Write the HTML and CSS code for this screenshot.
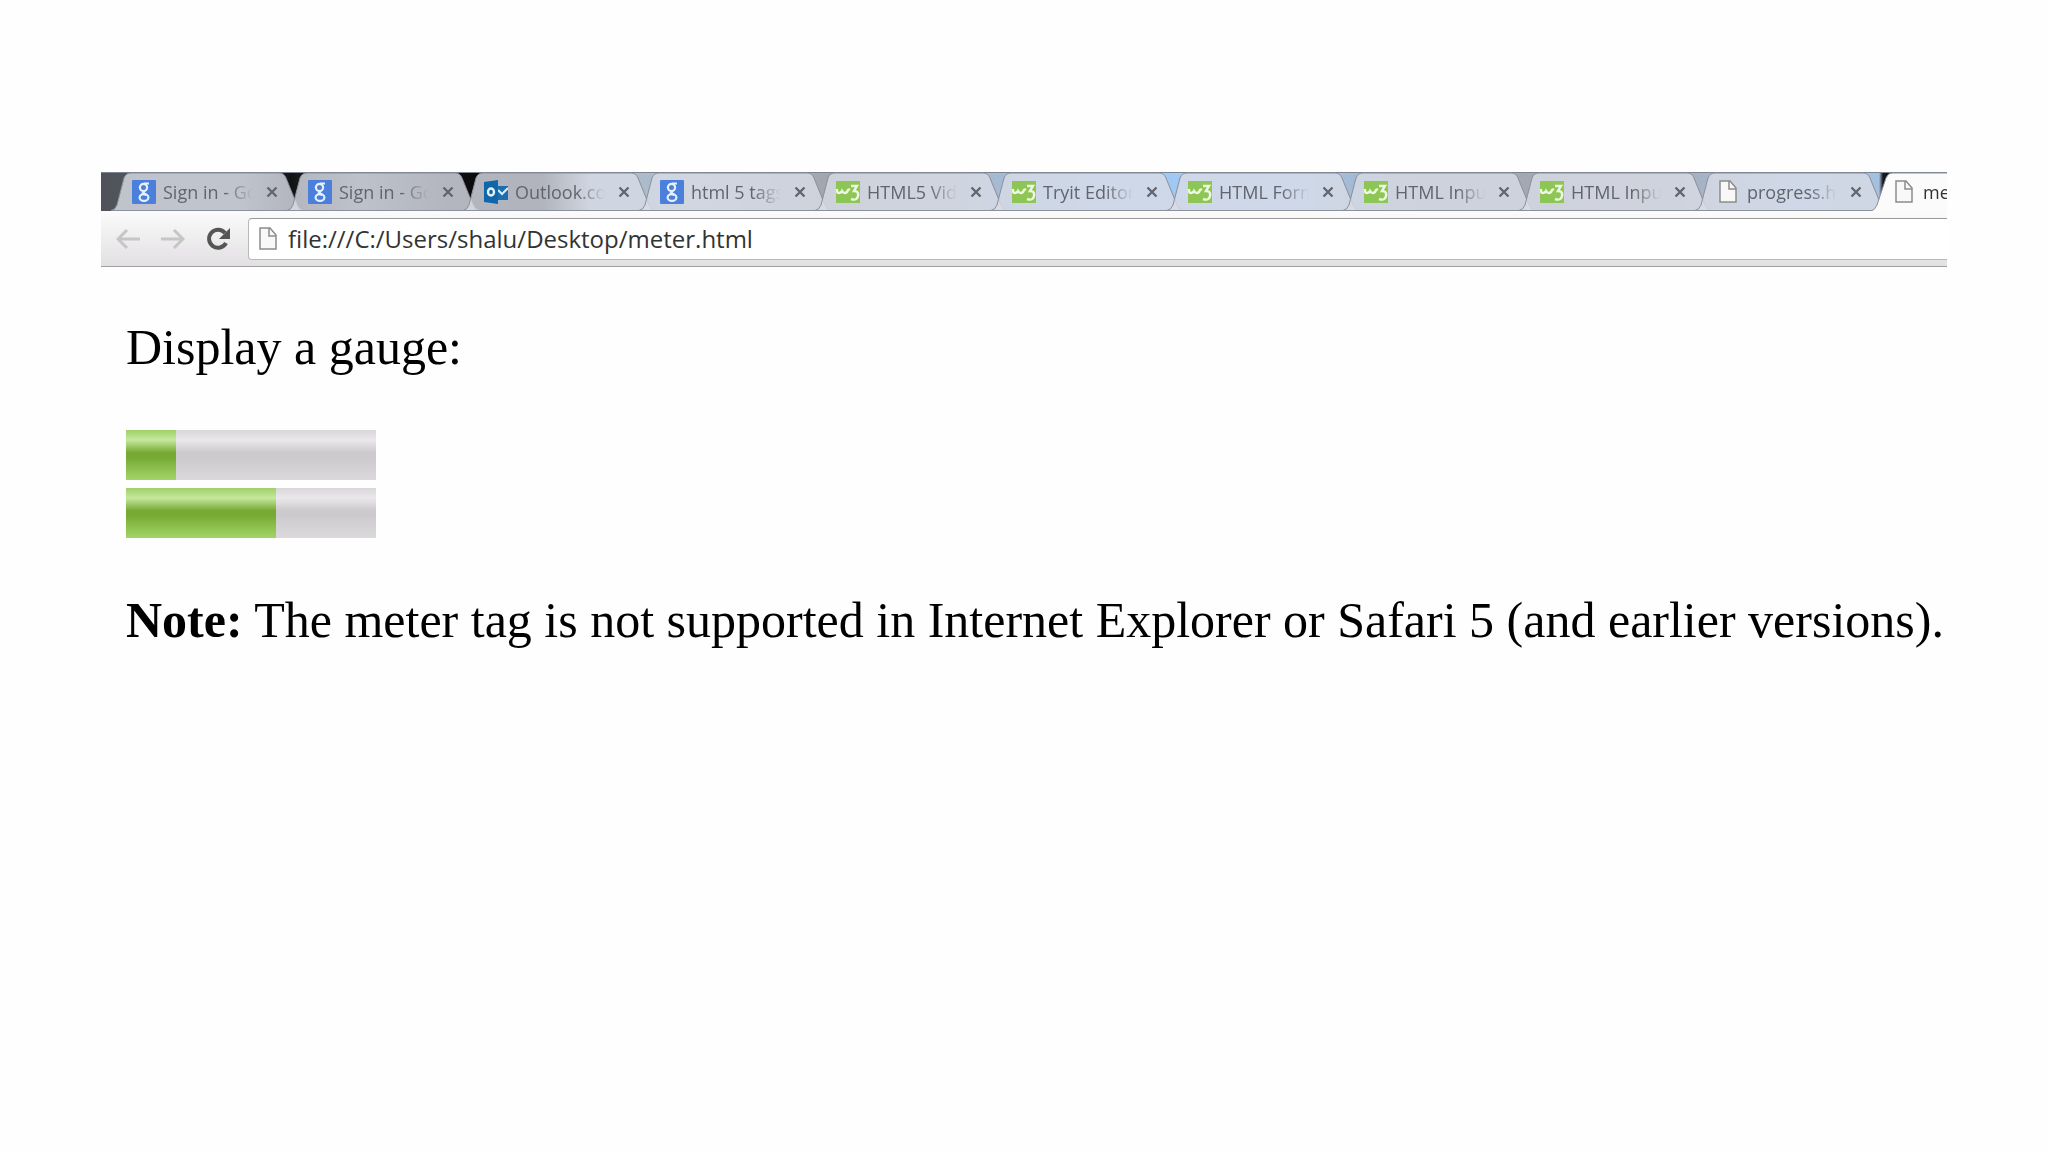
FILE: index.html
```html
<!DOCTYPE html>
<html lang="en">
<head>
  <meta charset="UTF-8">
  <title>meter.html</title>
  <link rel="stylesheet" href="styles.css">
</head>
<body>
  <!-- shared icons -->
  <svg class="defs" aria-hidden="true">
    <symbol id="google" viewBox="0 0 24 24">
      <rect width="24" height="24" rx="1" fill="#4a80dc"/>
      <g fill="none" stroke="#e6f0ff" stroke-width="2.2">
        <ellipse cx="11.500" cy="7.500" rx="3.600" ry="3.600"/>
        <path d="M12 3.500h5M13 11l-2 2 3 2"/>
        <ellipse cx="12" cy="17.500" rx="4.400" ry="3.400"/>
      </g>
    </symbol>
    <symbol id="outlook" viewBox="0 0 24 24">
      <path d="M14 6h11v14H14z" fill="#1b6fb0"/>
      <path d="M14 10l4 4 6-6" fill="none" stroke="#dcebf7" stroke-width="2"/>
      <path d="M0 2l14-2v24L0 22z" fill="#0f66a8"/>
      <ellipse cx="7" cy="12" rx="3" ry="3.500" fill="none" stroke="#e4f1fa" stroke-width="2.400"/>
    </symbol>
    <symbol id="w3" viewBox="0 0 24 24">
      <path d="M0 1h24v22H0z" fill="#8dc655"/>
      <path d="M1 9v2q0 2 2 2t3-2q1 2 3 2t3-3l2-1" fill="none" stroke="#eef8e0" stroke-width="2.400"/>
      <path d="M15 6h6l-3 5q5 0 4 5t-7 3" fill="none" stroke="#eef8e0" stroke-width="2.400"/>
    </symbol>
    <symbol id="page" viewBox="0 0 24 24">
      <path d="M4 1h10l6 7v14H4z" fill="#f8f8f8" stroke="#8c8c8c" stroke-width="1.500"/>
      <path d="M13 1v8h7" fill="none" stroke="#8c8c8c" stroke-width="1.500"/>
    </symbol>
    <symbol id="close" viewBox="0 0 12 12">
      <path d="M1.500 1.500l9 9M10.500 1.500l-9 9" stroke="#62666e" stroke-width="2.400"/>
    </symbol>
    <symbol id="shape" viewBox="0 0 192 39" preserveAspectRatio="none">
      <path d="M0 38.500Q4 38 6 33L13 6Q15 1 20 1H168Q173 1 175 6L186 33Q188 38 192 38.500z"/>
    </symbol>
    <symbol id="shape-open" viewBox="0 0 192 39" preserveAspectRatio="none">
      <path d="M0 39Q4 38 6 33L15 6Q17 1 21 1H168Q173 1 175 6L186 33Q188 38 192 39"/>
    </symbol>
  </svg>

  <div class="window">
    <nav class="tabs">
      <div class="tab"><svg class="shape"><use href="#shape"/></svg><svg class="icon"><use href="#google"/></svg><button class="title">Sign in - Google</button><button class="close" aria-label="Close"><svg><use href="#close"/></svg></button></div>
      <div class="tab"><svg class="shape"><use href="#shape"/></svg><svg class="icon"><use href="#google"/></svg><button class="title">Sign in - Google</button><button class="close" aria-label="Close"><svg><use href="#close"/></svg></button></div>
      <div class="tab"><svg class="shape"><use href="#shape"/></svg><svg class="icon"><use href="#outlook"/></svg><button class="title">Outlook.com</button><button class="close" aria-label="Close"><svg><use href="#close"/></svg></button></div>
      <div class="tab"><svg class="shape"><use href="#shape"/></svg><svg class="icon"><use href="#google"/></svg><button class="title">html 5 tags</button><button class="close" aria-label="Close"><svg><use href="#close"/></svg></button></div>
      <div class="tab"><svg class="shape"><use href="#shape"/></svg><svg class="icon"><use href="#w3"/></svg><button class="title">HTML5 Video</button><button class="close" aria-label="Close"><svg><use href="#close"/></svg></button></div>
      <div class="tab"><svg class="shape"><use href="#shape"/></svg><svg class="icon"><use href="#w3"/></svg><button class="title">Tryit Editor</button><button class="close" aria-label="Close"><svg><use href="#close"/></svg></button></div>
      <div class="tab"><svg class="shape"><use href="#shape"/></svg><svg class="icon"><use href="#w3"/></svg><button class="title">HTML Forms</button><button class="close" aria-label="Close"><svg><use href="#close"/></svg></button></div>
      <div class="tab"><svg class="shape"><use href="#shape"/></svg><svg class="icon"><use href="#w3"/></svg><button class="title">HTML Input</button><button class="close" aria-label="Close"><svg><use href="#close"/></svg></button></div>
      <div class="tab"><svg class="shape"><use href="#shape"/></svg><svg class="icon"><use href="#w3"/></svg><button class="title">HTML Input</button><button class="close" aria-label="Close"><svg><use href="#close"/></svg></button></div>
      <div class="tab"><svg class="shape"><use href="#shape"/></svg><svg class="icon"><use href="#page"/></svg><button class="title">progress.html</button><button class="close" aria-label="Close"><svg><use href="#close"/></svg></button></div>
      <div class="tab active"><svg class="shape"><use href="#shape-open"/></svg><svg class="icon"><use href="#page"/></svg><button class="title">meter.html</button></div>
    </nav>

    <div class="toolbar">
      <button class="nav" aria-label="Back"><svg viewBox="0 0 24 24"><path d="M24 12H2M11 3l-9 9 9 9" stroke="#c6c6c6"/></svg></button>
      <button class="nav" aria-label="Forward"><svg viewBox="0 0 24 24"><path d="M0 12h22M13 3l9 9-9 9" stroke="#c6c6c6"/></svg></button>
      <button class="nav" aria-label="Reload"><svg viewBox="0 0 24 24"><path d="M19 6A9 9 0 1 0 20 16" stroke="#555" stroke-width="4"/><path d="M24 1v11H13z" fill="#555"/></svg></button>
      <label class="address">
        <svg class="icon"><use href="#page"/></svg>
        <input type="text" aria-label="Address" value="file:///C:/Users/shalu/Desktop/meter.html">
      </label>
    </div>

    <main>
      <p>Display a gauge:</p>
      <div class="meters">
        <meter value="2" min="0" max="10" aria-label="2 out of 10"></meter>
        <meter value="0.6" aria-label="60%"></meter>
      </div>
      <p><b>Note:</b> The meter tag is not supported in Internet Explorer or Safari 5 (and earlier versions).</p>
    </main>
  </div>
</body>
</html>
```

FILE: styles.css
```css
body {
  margin: 0;
  padding: 172px 101px;
  background: #fefefe;
  font-family: "Open Sans", sans-serif;
}

button {
  padding: 0;
  border: none;
  background: none;
  font: inherit;
  color: inherit;
}

.defs {
  position: absolute;
  width: 0;
  height: 0;
}

.window {
  overflow: hidden;
}

.tabs {
  display: flex;
  height: 39px;
  padding-left: 10px;
  background: linear-gradient(90deg, #4f5259 0, #55585f 60px, #55585f 140px, #111214 190px, #4a4c52 260px, #111 340px, #000 440px, #a9bccd 490px, #b0bac8 600px, #a2a5ae 730px, #a9afba 820px, #a0c8f4 1000px, #a4c8f0 1200px, #a2a7b0 1320px, #a5a9b4 1560px, #a8c8ea 1690px, #a4c0de 1778px, #15171c 1782px);
  box-shadow: inset 0 1px #7c828e;
  overflow: hidden;
}

.tab {
  position: relative;
  display: flex;
  flex: none;
  align-items: center;
  gap: 7px;
  box-sizing: border-box;
  width: 176px;
  padding-left: 21px;
  font-size: 18px;
  color: #61656d;
}

.shape {
  position: absolute;
  top: 0;
  left: 0;
  width: 192px;
  height: 39px;
  fill: rgba(216, 220, 229, 0.82);
  stroke: #8b909a;
}

.icon {
  position: relative;
  flex: none;
  width: 24px;
  height: 24px;
}

.title {
  position: relative;
  width: 90px;
  overflow: hidden;
  text-align: left;
  white-space: nowrap;
  -webkit-mask-image: linear-gradient(90deg, #000 62px, transparent 90px);
}

.close {
  position: relative;
  width: 12px;
  height: 12px;
  margin-left: 6px;
}

.close svg {
  display: block;
  width: 12px;
  height: 12px;
}

.tab.active {
  color: #333;
}

.tab.active .shape {
  fill: #fbfbfb;
}

.toolbar {
  display: flex;
  align-items: center;
  gap: 21px;
  box-sizing: border-box;
  height: 56px;
  padding-left: 15px;
  border-bottom: 1px solid #a0a0a0;
  background: linear-gradient(#fbfbfb, #e2e0e2);
}

.nav svg {
  display: block;
  width: 24px;
  height: 24px;
  fill: none;
  stroke-width: 3;
}

.address {
  display: flex;
  flex: 1;
  align-items: center;
  gap: 8px;
  box-sizing: border-box;
  height: 42px;
  margin-left: -3px;
  padding-left: 7px;
  border: 1px solid #b8b8b8;
  border-top-color: #999;
  border-right: none;
  border-radius: 4px 0 0 4px;
  background: #fff;
}

.address input {
  flex: 1;
  padding: 0;
  border: none;
  outline: none;
  background: none;
  font: 24px/32px "Open Sans", sans-serif;
  color: #333;
}

main {
  padding: 52px 0 50px 25px;
  font: 50px/57px "Liberation Serif", serif;
  color: #000;
}

p {
  margin: 0;
  white-space: nowrap;
}

.meters {
  display: grid;
  gap: 8px;
  margin: 54px 0;
}

meter {
  display: block;
  width: 250px;
  height: 50px;
  -webkit-appearance: none;
  appearance: none;
}

meter::-webkit-meter-inner-element {
  display: block;
  position: static;
  height: 50px;
  margin: 0;
  transform: none;
}

meter::-webkit-meter-bar {
  position: static;
  height: 50px;
  margin: 0;
  border: none;
  border-radius: 0;
  transform: none;
  background: linear-gradient(#d8d6d8, #eae8ea 20%, #cccacc 45%, #cccacc 55%, #dbd9db);
}

meter::-webkit-meter-optimum-value {
  background: linear-gradient(#9fd068, #c5e89e 20%, #7a3 45%, #7a3 55%, #a2d568);
}
```
